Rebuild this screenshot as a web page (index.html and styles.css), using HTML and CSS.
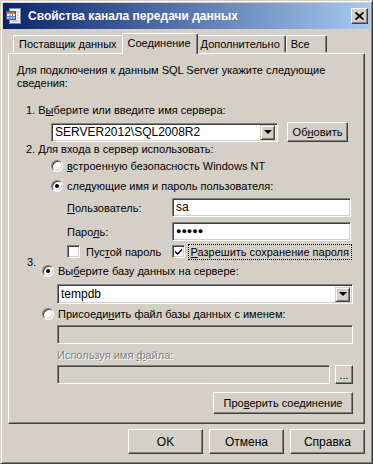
FILE: index.html
```html
<!DOCTYPE html>
<html lang="ru">
<head>
  <meta charset="UTF-8">
  <title>Свойства канала передачи данных</title>
  <link rel="stylesheet" href="styles.css">
</head>
<body>
  <div class="window">
    <div class="titlebar">
      <svg class="app-icon" width="16" height="16" viewBox="0 0 16 16">
        <rect x="3.5" y="0.5" width="11" height="15" fill="#fff" stroke="#7f8fa8"/>
        <rect x="0.5" y="3.5" width="9" height="8" fill="#fff" stroke="#3a5a9a"/>
        <rect x="1" y="4" width="8" height="2" fill="#e07030"/>
        <path d="M1 8.5h8M1 10h8M4 6v5M6.5 6v5" stroke="#6a82b8" stroke-width="1"/>
        <path d="M11 4h2M11 7h2M11 10h2M5 13h8" stroke="#9aa8c0"/>
      </svg>
      <span class="title">Свойства канала передачи данных</span>
      <span class="close-btn">
        <svg width="9" height="8" viewBox="0 0 9 8"><path d="M0.5 0.5L8.5 7.5M8.5 0.5L0.5 7.5" stroke="#000" stroke-width="1.8"/></svg>
      </span>
    </div>

    <div class="tabs">
      <div class="tab tab-provider">Поставщик данных</div>
      <div class="tab active">Соединение</div>
      <div class="tab">Дополнительно</div>
      <div class="tab tab-all">Все</div>
    </div>

    <div class="panel">
      <p class="intro">Для подключения к данным SQL Server укажите следующие сведения:</p>

      <div class="step">1. В<u>ы</u>берите или введите имя сервера:</div>
      <div class="server-row">
        <div class="combo server-combo">
          <span class="combo-text">SERVER2012\SQL2008R2</span>
          <span class="drop-btn"><span class="arrow"></span></span>
        </div>
        <button class="btn refresh-btn">Об<u>н</u>овить</button>
      </div>

      <div class="step step2">2. Для входа в сервер использовать:</div>
      <div class="option opt-nt">
        <span class="radio"></span>
        <span><u>в</u>строенную безопасность Windows NT</span>
      </div>
      <div class="option opt-user">
        <span class="radio checked"></span>
        <span>сле<u>д</u>ующие имя и пароль пользователя:</span>
      </div>
      <div class="field-row user-row">
        <label class="field-label"><u>П</u>ользователь:</label>
        <div class="textbox">sa</div>
      </div>
      <div class="field-row pass-row">
        <label class="field-label">Паро<u>л</u>ь:</label>
        <div class="textbox dots">●●●●●</div>
      </div>
      <div class="check-row">
        <div class="check-item blank-pass">
          <span class="checkbox"></span>
          <span>Пус<u>т</u>ой пароль</span>
        </div>
        <div class="check-item save-pass">
          <span class="checkbox checked">
            <svg width="7" height="7" viewBox="0 0 7 7"><path d="M0 2.5l2.5 2.5L7 0.5v2L2.5 7 0 4.5z" fill="#000"/></svg>
          </span>
          <span class="focused"><u>Р</u>азрешить сохранение пароля</span>
        </div>
      </div>

      <div class="section3">
        <div class="step-num">3.</div>
        <div class="section3-body">
          <div class="option">
            <span class="radio checked"></span>
            <span>Вы<u>б</u>ерите базу данных на сервере:</span>
          </div>
          <div class="combo db-combo">
            <span class="combo-text">tempdb</span>
            <span class="drop-btn"><span class="arrow"></span></span>
          </div>
          <div class="option opt-attach">
            <span class="radio"></span>
            <span>Присоеди<u>н</u>ить файл базы данных с именем:</span>
          </div>
          <div class="textbox disabled attach-box"></div>
          <div class="disabled-label">Используя имя <u>ф</u>айла:</div>
          <div class="file-row">
            <div class="textbox disabled file-box"></div>
            <button class="btn browse-btn" disabled>...</button>
          </div>
        </div>
      </div>

      <div class="test-row">
        <button class="btn test-btn">Про<u>в</u>ерить соединение</button>
      </div>
    </div>

    <div class="footer">
      <button class="btn dlg-btn">OK</button>
      <button class="btn dlg-btn">Отмена</button>
      <button class="btn dlg-btn">Справка</button>
    </div>
  </div>
</body>
</html>
```

FILE: styles.css
```css
* {
  box-sizing: border-box;
}
body {
  margin: 0;
  font-family: "Liberation Sans", Arial, sans-serif;
  font-size: 11px;
  color: #000;
  background: #d4d0c8;
}
u {
  text-decoration: underline;
  text-underline-offset: 1px;
}
.window {
  width: 373px;
  height: 464px;
  padding: 2px;
  background: #d4d0c8;
  border: 1px solid;
  border-color: #d4d0c8 #404040 #404040 #d4d0c8;
  box-shadow: inset 1px 1px #fff, inset -1px -1px #808080;
}

/* title bar */
.titlebar {
  height: 26px;
  display: flex;
  align-items: center;
  padding: 0 2px 0 3px;
  background: linear-gradient(to right, #0a246a, #a6caf0);
}
.app-icon {
  flex: none;
}
.title {
  flex: 1;
  margin-left: 6px;
  color: #fff;
  font-weight: bold;
  font-size: 12px;
}
.close-btn {
  width: 17px;
  height: 16px;
  display: flex;
  align-items: center;
  justify-content: center;
  background: #d4d0c8;
  border: 1px solid;
  border-color: #fff #404040 #404040 #fff;
  box-shadow: inset -1px -1px #808080;
}

/* tabs */
.tabs {
  display: flex;
  align-items: flex-end;
  height: 24px;
  padding-left: 9px;
  position: relative;
  z-index: 1;
}
.tab {
  height: 17px;
  padding: 2px 5px 0 4px;
  border: 1px solid;
  border-bottom: none;
  border-color: #fff #404040 transparent #fff;
  border-radius: 2px 2px 0 0;
  box-shadow: inset -1px 0 #808080;
  white-space: nowrap;
  margin-bottom: 1px;
}
.tab-provider {
  margin-left: 1px;
  padding: 2px 6px 0 5px;
}
.tab.active {
  height: 21px;
  margin: 0 -2px -1px;
  padding: 3px 6px 0 5px;
  background: #d4d0c8;
  position: relative;
  z-index: 2;
}
.tab-all {
  width: 41px;
}

/* tab page */
.panel {
  margin: 0 5px 0 5px;
  height: 371px;
  padding: 10px 11px 0 8px;
  border: 1px solid;
  border-color: #fff #404040 #404040 #fff;
  box-shadow: inset -1px -1px #808080;
}
.intro {
  margin: 0;
  line-height: 13px;
}
.step {
  margin-top: 13px;
  margin-left: 9px;
  line-height: 14px;
}
.step2 {
  margin-top: 0;
}
.server-row {
  display: flex;
  align-items: center;
  height: 20px;
  margin-top: 5px;
  margin-left: 34px;
}
.server-combo {
  width: 227px;
}
.refresh-btn {
  width: 61px;
  height: 20px;
  margin-left: 9px;
}

/* sunken controls */
.combo, .textbox {
  height: 19px;
  background: #fff;
  border: 1px solid;
  border-color: #808080 #fff #fff #808080;
  box-shadow: inset 1px 1px #404040, inset -1px -1px #d4d0c8;
}
.combo {
  display: flex;
  align-items: center;
  padding: 2px;
}
.combo-text {
  flex: 1;
  padding-left: 1px;
  white-space: nowrap;
  font-size: 12px;
}
.drop-btn {
  width: 15px;
  height: 15px;
  display: flex;
  align-items: center;
  justify-content: center;
  background: #d4d0c8;
  border: 1px solid;
  border-color: #d4d0c8 #404040 #404040 #d4d0c8;
  box-shadow: inset 1px 1px #fff, inset -1px -1px #808080;
}
.arrow {
  width: 0;
  height: 0;
  border-left: 4px solid transparent;
  border-right: 4px solid transparent;
  border-top: 4px solid #000;
}
.textbox {
  padding: 1px 3px;
  line-height: 15px;
  font-size: 12px;
}
.textbox.dots {
  font-size: 9px;
}
.textbox.disabled {
  background: #d4d0c8;
}

/* options */
.option {
  display: flex;
  align-items: center;
  height: 18px;
  gap: 4px;
  white-space: nowrap;
}
.opt-nt {
  margin-top: 1px;
  margin-left: 34px;
}
.opt-user {
  margin-top: 2px;
  margin-left: 34px;
}
.radio {
  width: 12px;
  height: 12px;
  flex: none;
  position: relative;
  border-radius: 50%;
  background: #fff;
  border: 1px solid;
  border-color: #808080 #fff #fff #808080;
  box-shadow: inset 1px 1px #404040, inset -1px -1px #d4d0c8;
}
.radio.checked::after {
  content: "";
  position: absolute;
  left: 3px;
  top: 3px;
  width: 4px;
  height: 4px;
  border-radius: 50%;
  background: #000;
}
.field-row {
  display: flex;
  align-items: center;
  height: 19px;
  margin-left: 50px;
  margin-right: 2px;
}
.user-row {
  margin-top: 3px;
}
.pass-row {
  margin-top: 5px;
}
.field-label {
  width: 105px;
  flex: none;
}
.field-row .textbox {
  flex: 1;
}
.check-row {
  display: flex;
  align-items: center;
  height: 19px;
  margin-top: 1px;
  margin-left: 50px;
  margin-right: 2px;
}
.check-item {
  display: flex;
  align-items: center;
  white-space: nowrap;
}
.blank-pass {
  width: 105px;
  gap: 6px;
}
.save-pass {
  flex: 1;
  gap: 4px;
}
.checkbox {
  width: 13px;
  height: 13px;
  flex: none;
  display: flex;
  align-items: center;
  justify-content: center;
  background: #fff;
  border: 1px solid;
  border-color: #808080 #fff #fff #808080;
  box-shadow: inset 1px 1px #404040, inset -1px -1px #d4d0c8;
}
.focused {
  flex: 1;
  padding: 1px 2px;
  outline: 1px dotted #000;
}

/* section 3 */
.section3 {
  display: flex;
  margin-left: 10px;
}
.step-num {
  width: 15px;
  flex: none;
  margin-top: -5px;
  line-height: 13px;
}
.section3-body {
  flex: 1;
  margin-top: 1px;
}
.db-combo {
  height: 20px;
  margin-top: 4px;
  margin-left: 15px;
}
.opt-attach {
  margin-top: 1px;
}
.attach-box {
  margin-top: 2px;
  margin-left: 15px;
}
.disabled-label {
  margin-top: 4px;
  margin-left: 15px;
  line-height: 14px;
  color: #808080;
  text-shadow: 1px 1px #fff;
}
.file-row {
  display: flex;
  margin-top: 3px;
  margin-left: 15px;
}
.file-box {
  flex: 1;
}
.browse-btn {
  width: 18px;
  height: 19px;
  margin-left: 5px;
  padding: 0;
  color: #808080;
  font-size: 10px;
  text-shadow: 1px 1px #fff;
}

/* buttons */
.btn {
  font-family: inherit;
  font-size: 11px;
  color: #000;
  background: #d4d0c8;
  border: 1px solid;
  border-color: #fff #404040 #404040 #fff;
  box-shadow: inset -1px -1px #808080;
  padding: 0;
}
.test-row {
  display: flex;
  justify-content: flex-end;
  margin-top: 8px;
}
.test-btn {
  width: 140px;
  height: 22px;
}
.footer {
  display: flex;
  justify-content: flex-end;
  gap: 6px;
  margin-top: 5px;
  padding-right: 5px;
}
.dlg-btn {
  width: 75px;
  height: 25px;
  font-size: 12px;
}
```
